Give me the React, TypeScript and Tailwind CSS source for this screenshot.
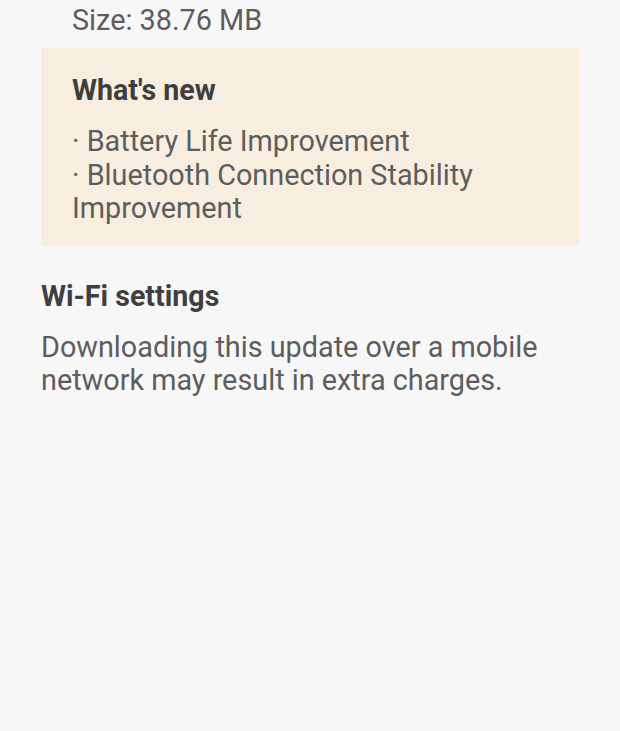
export default function App() {
  return (
    <div
      className="w-[620px] h-[731px] bg-[#f7f7f7] overflow-hidden text-[#5d5d5d]"
      style={{ fontFamily: "Roboto, 'Noto Sans', sans-serif" }}
    >
      <div className="px-[41px] pt-[3px]">
        <p className="pl-[31px] text-[28.8px] leading-[34px]">Size: 38.76 MB</p>
        <div className="mt-[11px] bg-[#f8eee0] pl-[31px] pr-4 pt-[25px] pb-[20px]">
          <p className="text-[28.6px] leading-[34px] font-bold text-[#3e3e3c]">What's new</p>
          <p className="mt-[18px] text-[28.8px] leading-[33.5px]">
            · Battery Life Improvement
            <br />
            · Bluetooth Connection Stability
            <br />
            Improvement
          </p>
        </div>
        <p className="mt-[33px] text-[28.6px] leading-[34px] font-bold text-[#3f3f3f]">Wi-Fi settings</p>
        <p className="mt-[18px] text-[28.8px] leading-[33px] pr-4">
          Downloading this update over a mobile network may result in extra charges.
        </p>
      </div>
    </div>
  );
}
